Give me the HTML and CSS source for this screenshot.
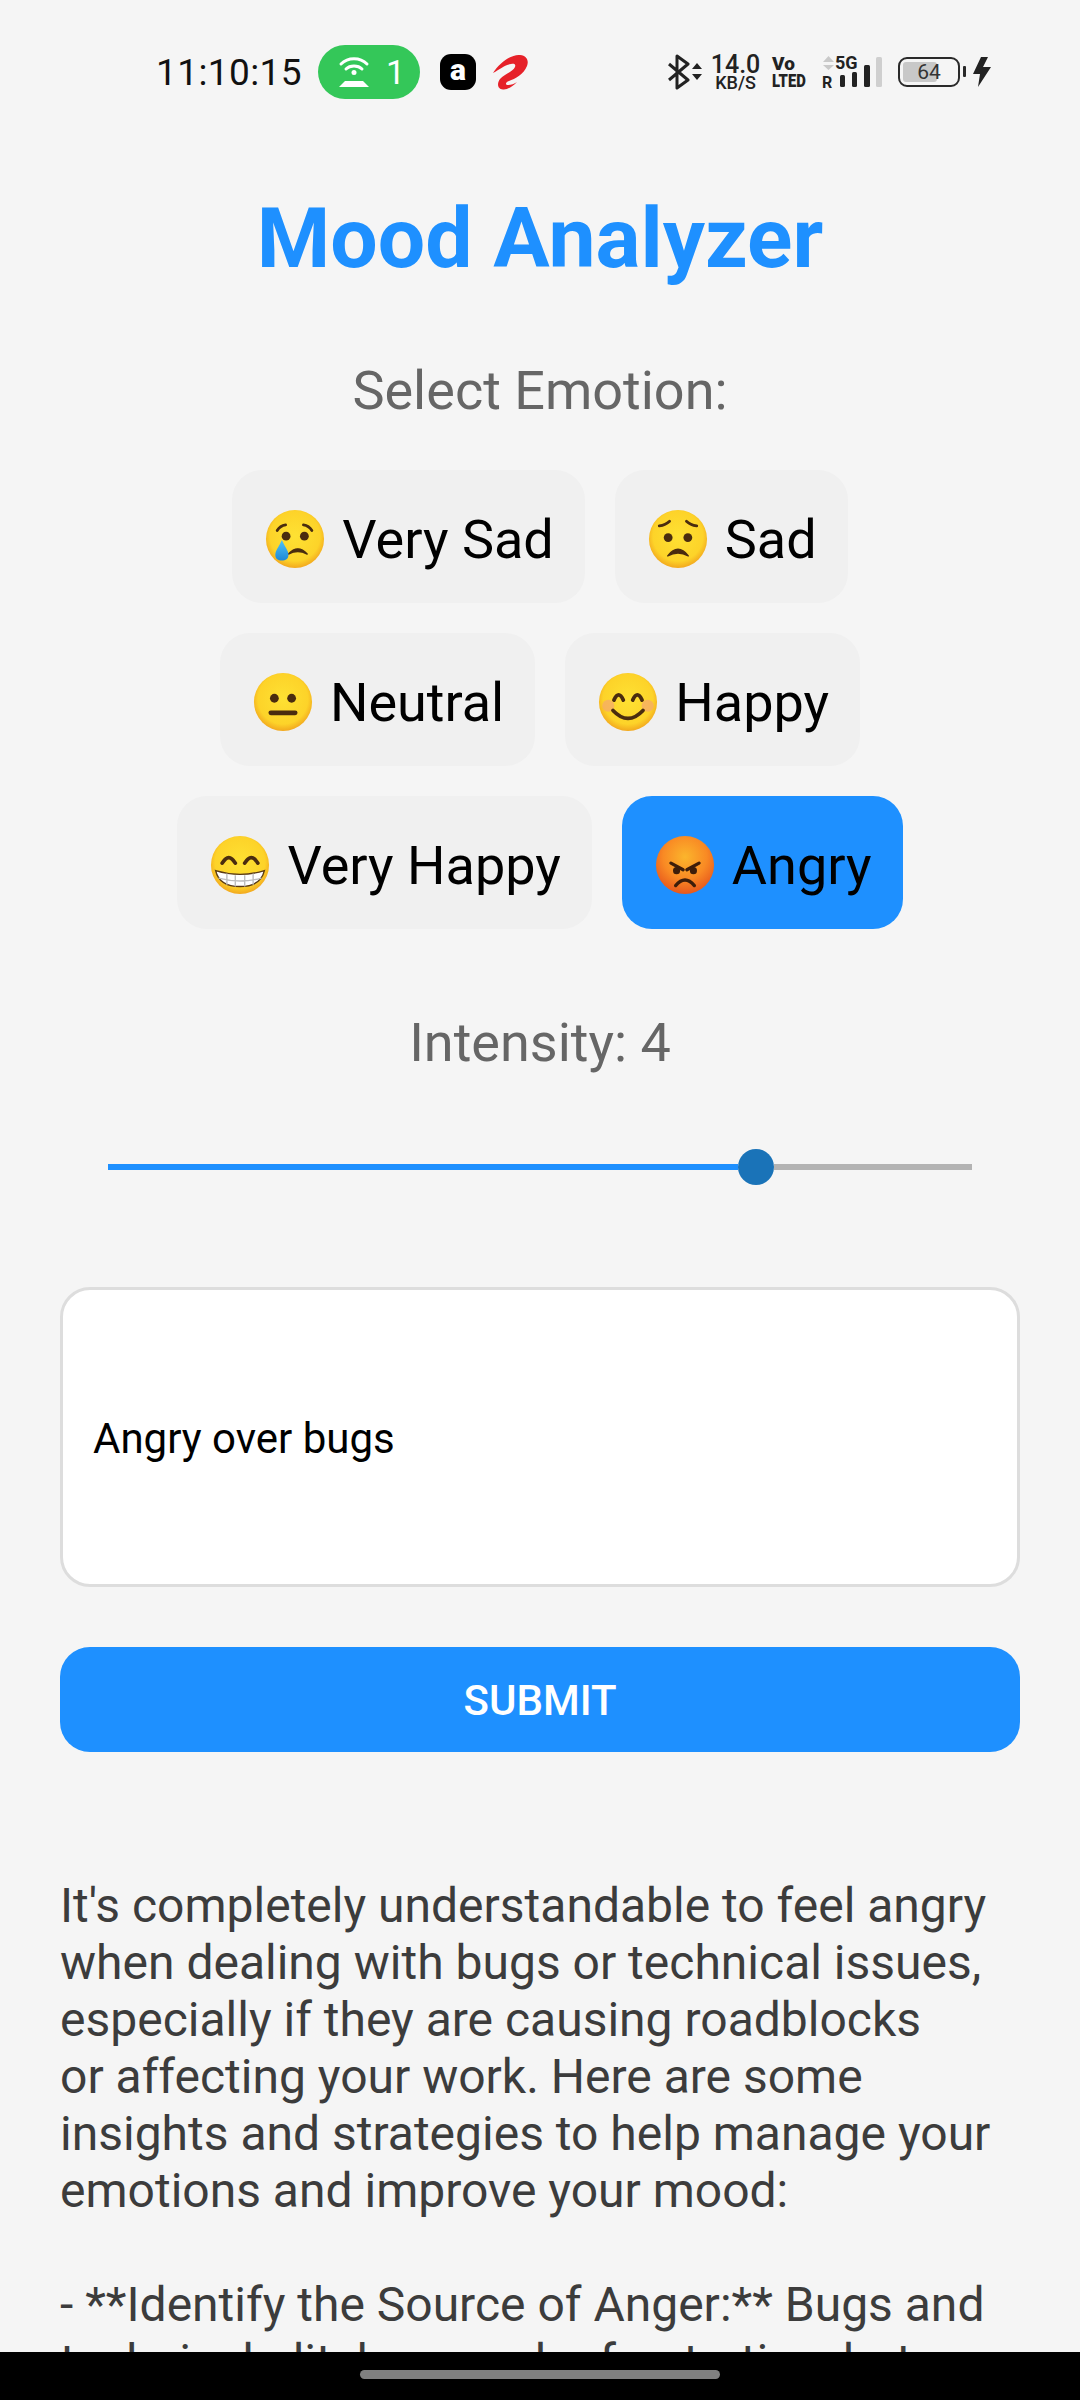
FILE: index.html
```html
<!DOCTYPE html>
<html lang="en">
<head>
<meta charset="utf-8">
<title>Mood Analyzer</title>
<link rel="stylesheet" href="styles.css">
</head>
<body>
<svg class="defs" width="0" height="0" aria-hidden="true">
  <defs>
    <radialGradient id="yel" cx="50%" cy="45%" r="55%">
      <stop offset="0" stop-color="#fee133"/><stop offset="0.78" stop-color="#fdd329"/><stop offset="1" stop-color="#f2a81e"/>
    </radialGradient>
    <radialGradient id="ang" cx="50%" cy="36%" r="68%">
      <stop offset="0" stop-color="#fbb52c"/><stop offset="0.55" stop-color="#f98a24"/><stop offset="1" stop-color="#e4501c"/>
    </radialGradient>
    <linearGradient id="tear" x1="0" y1="0" x2="0" y2="1">
      <stop offset="0" stop-color="#4fc3f7"/><stop offset="1" stop-color="#1e88d6"/>
    </linearGradient>
  </defs>
</svg>
<header class="status">
  <div class="status-left">
    <span class="clock">11:10:15</span>
    <span class="hotspot">
      <svg class="hotspot-ic" viewBox="0 0 32 36"><path d="M3 10C10 3 22 3 29 10" class="hs-line"/><path d="M8 15C12 11 20 11 24 15" class="hs-line"/><circle cx="16" cy="18.500" r="2.500" fill="#fff"/><path d="M1 33L7 27H25L31 33Z" fill="#fff"/></svg>
      <span class="hotspot-n">1</span>
    </span>
    <span class="app-a">a</span>
    <svg class="airtel" viewBox="0 0 36 36"><path d="M1 19C8 8 20 0 28 1C35 1.500 37 7 35 12C32 20 23 25 17 27C14 28 13 30 15 31C18 31.500 22 30 25 28C20 33 15 36 11 35.500C5 35 5 29 8 25C12 20 21 18 23 13C24 10 22 9 19 10C13 11 8 15 1 19Z" fill="#e62129"/></svg>
  </div>
  <div class="status-right">
    <svg class="ic-bt" viewBox="0 0 34 36"><path d="M1 10L20 26L9 34V2L20 10L1 26" class="bt-line"/><path d="M24 15L29 9L34 15ZM24 20H34L29 26Z" fill="#222"/></svg>
    <span class="speed"><b>14.0</b><i>KB/S</i></span>
    <span class="volte"><b>Vo</b><i>LTED</i></span>
    <svg class="signal" viewBox="0 0 60 36">
      <path d="M1 8L6.500 2L12 8ZM1 11H12L6.500 16Z" fill="#c9c9c9"/>
      <text x="13" y="15" class="sig-5g">5G</text>
      <text x="0" y="34" class="sig-r">R</text>
      <rect x="18" y="21" width="5" height="12" rx="1.500" fill="#222"/>
      <rect x="30" y="18" width="5" height="15" rx="1.500" fill="#222"/>
      <rect x="42" y="11" width="6" height="22" rx="1.500" fill="#222"/>
      <rect x="54" y="3" width="6" height="30" rx="1.500" fill="#cfcfcf"/>
    </svg>
    <span class="battery"><span class="bat-fill"></span><span class="bat-num">64</span><span class="bat-tip"></span></span>
    <svg class="bolt" viewBox="0 0 20 32"><path d="M9 1L1 18H8L6 31L19 11H11L16 1Z" fill="#222"/></svg>
  </div>
</header>

<main class="page">
  <h1 class="title">Mood Analyzer</h1>
  <p class="label label-emotion">Select Emotion:</p>
  <div class="moods">
    <div class="mood-row">
      <button class="mood">
        <svg class="emo" viewBox="0 0 64 64"><circle cx="32" cy="32" r="31" fill="url(#yel)"/><circle cx="22.500" cy="29" r="4.700" fill="#4a2c0f"/><circle cx="42" cy="29" r="4.700" fill="#4a2c0f"/><path d="M13 23Q16 18 22 17M41 17Q47 18 50 23" class="brow"/><path d="M25 48Q35 37 45 48Q35 43 25 48Z" class="mouth-fill"/><path d="M18 33C15 40 11 44 11 49C11 53 14 55 18 55C22 55 25 53 25 49C25 44 21 40 18 33Z" fill="url(#tear)"/></svg>
        <span>Very Sad</span>
      </button>
      <button class="mood">
        <svg class="emo" viewBox="0 0 64 64"><circle cx="32" cy="32" r="31" fill="url(#yel)"/><circle cx="21.500" cy="30.500" r="4.700" fill="#4a2c0f"/><circle cx="42.500" cy="30.500" r="4.700" fill="#4a2c0f"/><path d="M12 18Q19 17 23 13M41 13Q45 17 52 18" class="brow"/><path d="M21 50Q32 36 43 50Q32 44 21 50Z" class="mouth-fill"/></svg>
        <span>Sad</span>
      </button>
    </div>
    <div class="mood-row">
      <button class="mood">
        <svg class="emo" viewBox="0 0 64 64"><circle cx="32" cy="32" r="31" fill="url(#yel)"/><circle cx="22.800" cy="28" r="4.700" fill="#4a2c0f"/><circle cx="41.200" cy="28" r="4.700" fill="#4a2c0f"/><rect x="16.500" y="41" width="31" height="5" rx="2.500" fill="#4a2c0f"/></svg>
        <span>Neutral</span>
      </button>
      <button class="mood">
        <svg class="emo" viewBox="0 0 64 64"><circle cx="32" cy="32" r="31" fill="url(#yel)"/><circle cx="11" cy="36" r="6.500" fill="#f4a07c" opacity=".6"/><circle cx="53" cy="36" r="6.500" fill="#f4a07c" opacity=".6"/><path d="M17 30Q22 19 27 30M37 30Q42 19 47 30" class="eye-arc"/><path d="M16 41Q32 58 48 41" class="eye-arc"/></svg>
        <span>Happy</span>
      </button>
    </div>
    <div class="mood-row">
      <button class="mood">
        <svg class="emo" viewBox="0 0 64 64"><circle cx="32" cy="32" r="31" fill="url(#yel)"/><path d="M13 30Q20 18 27 30M37 30Q44 18 51 30" class="eye-arc"/><path d="M6 38Q32 46 58 38Q54 55 32 55Q10 55 6 38Z" fill="#fff" stroke="#5a3a14" stroke-width="1.500"/><path d="M18 41V53M27 43V55M37 43V55M46 41V53M9 46Q32 52 55 46" class="teeth"/></svg>
        <span>Very Happy</span>
      </button>
      <button class="mood mood-on">
        <svg class="emo" viewBox="0 0 64 64"><circle cx="32" cy="32" r="31" fill="url(#ang)"/><path d="M17 30L30 37M47 30L34 37" class="ang-line"/><circle cx="23" cy="38" r="3.800" fill="#3d1d0a"/><circle cx="41" cy="38" r="3.800" fill="#3d1d0a"/><path d="M22 54Q32 42 42 54" class="ang-line"/></svg>
        <span>Angry</span>
      </button>
    </div>
  </div>
  <p class="label label-intensity">Intensity: 4</p>
  <div class="slider">
    <div class="slider-on"></div>
    <div class="slider-thumb"></div>
    <div class="slider-off"></div>
  </div>
  <div class="field">Angry over bugs</div>
  <button class="submit">SUBMIT</button>
  <p class="answer">It's completely understandable to feel angry<br>when dealing with bugs or technical issues,<br>especially if they are causing roadblocks<br>or affecting your work. Here are some<br>insights and strategies to help manage your<br>emotions and improve your mood:<br><br>- **Identify the Source of Anger:** Bugs and<br>technical glitches can be frustrating, but</p>
</main>

<footer class="navbar"><span class="handle"></span></footer>
</body>
</html>
```
FILE: styles.css
```css
* { box-sizing: border-box; }
html, body { margin: 0; padding: 0; }
body {
  width: 1080px;
  height: 2400px;
  overflow: hidden;
  position: relative;
  background: #f5f5f5;
  font-family: Roboto, "Noto Sans", sans-serif;
}
.defs { position: absolute; }

/* status bar */
.status {
  height: 126px;
  padding: 45px 88px 0 156px;
  display: flex;
  justify-content: space-between;
  align-items: flex-start;
}
.status-left { display: flex; align-items: center; height: 54px; }
.clock { font-size: 37px; color: #111; letter-spacing: .4px; width: 162px; }
.hotspot {
  width: 102px; height: 54px; border-radius: 27px; background: #34c759;
  display: flex; align-items: center; padding-left: 20px; gap: 16px;
}
.hotspot-ic { width: 32px; height: 36px; }
.hs-line { fill: none; stroke: #fff; stroke-width: 3; stroke-linecap: round; }
.hotspot-n { color: #fff; font-size: 34px; }
.app-a {
  width: 36px; height: 36px; margin-left: 20px; border-radius: 11px; background: #000;
  color: #fff; font-size: 30px; font-weight: 900; display: flex; align-items: center; justify-content: center; line-height: 1; padding-bottom: 4px;
}
.airtel { width: 36px; height: 36px; margin-left: 16px; }
.status-right { display: flex; align-items: center; height: 54px; color: #222; }
.ic-bt { width: 34px; height: 36px; }
.bt-line { fill: none; stroke: #222; stroke-width: 3; stroke-linejoin: round; }
.speed { display: flex; flex-direction: column; align-items: center; margin-left: 10px; width: 47px; }
.speed b { font-size: 25px; font-weight: 500; height: 21px; line-height: 21px; }
.speed i { font-style: normal; font-size: 18px; font-weight: 500; height: 15px; line-height: 15px; }
.volte { display: flex; flex-direction: column; margin-left: 13px; width: 36px; }
.volte b { font-size: 19px; font-weight: 900; height: 17px; line-height: 17px; }
.volte i { font-style: normal; font-size: 19px; font-weight: 900; height: 17px; line-height: 17px; width: 46px; transform: scaleX(.78); transform-origin: left center; }
.signal { width: 60px; height: 36px; margin-left: 14px; }
.sig-5g { font: 700 18px Roboto, sans-serif; fill: #222; }
.sig-r { font: 700 16px Roboto, sans-serif; fill: #222; }
.battery {
  position: relative; width: 62px; height: 30px; margin-left: 16px;
  border: 2.500px solid #2a2a2a; border-radius: 9px; display: flex; align-items: center; justify-content: center;
}
.bat-fill { position: absolute; left: 3px; top: 3px; bottom: 3px; width: 34px; background: #c8c8c8; border-radius: 3px; }
.bat-num { position: relative; font-size: 21px; color: #333; }
.bat-tip { position: absolute; right: -8px; top: 7px; width: 3px; height: 11px; background: #2a2a2a; border-radius: 1px; }
.bolt { width: 20px; height: 32px; margin-left: 12px; }

/* content */
.page { padding: 0 60px; display: flex; flex-direction: column; align-items: center; }
.title { margin: 64px 0 0; font-size: 84px; line-height: 98px; font-weight: 700; color: #1e90ff; }
.label { margin: 0; font-size: 54px; color: #666; line-height: 64px; }
.label-emotion { margin-top: 71px; }
.moods { margin-top: 47px; display: flex; flex-direction: column; gap: 30px; }
.mood-row { display: flex; justify-content: center; gap: 30px; }
.mood {
  height: 133px; padding: 5px 31px 0 33px; border: 0; border-radius: 30px; background: #f0f0f0;
  color: #000; font: 400 54px Roboto, sans-serif; display: flex; align-items: center; gap: 17px;
}
.mood-on { background: #1e90ff; }
.emo { width: 60px; height: 60px; flex: none; }
.brow { fill: none; stroke: #4a2c0f; stroke-width: 3; stroke-linecap: round; }
.mouth-fill { fill: #4a2c0f; stroke: #4a2c0f; stroke-width: 1.500; stroke-linejoin: round; }
.eye-arc { fill: none; stroke: #4a2c0f; stroke-width: 4; stroke-linecap: round; }
.teeth { fill: none; stroke: #bdbdbd; stroke-width: 1.500; }
.ang-line { fill: none; stroke: #3d1d0a; stroke-width: 3.500; stroke-linecap: round; }
.label-intensity { margin-top: 82px; }
.slider { width: 864px; height: 36px; margin-top: 74px; display: flex; align-items: center; }
.slider-on { width: 630px; height: 6px; background: #1e90ff; }
.slider-thumb { width: 36px; height: 36px; border-radius: 50%; background: #1a73b8; flex: none; }
.slider-off { flex: 1; height: 6px; background: #b3b3b3; }
.field {
  width: 960px; height: 300px; margin-top: 102px; padding: 2px 30px 0; border: 3px solid #ddd; border-radius: 30px;
  background: #fff; color: #000; font-size: 42px; display: flex; align-items: center;
}
.submit {
  width: 960px; height: 105px; margin-top: 60px; padding: 2px 0 0; border: 0; border-radius: 30px; background: #1e90ff;
  color: #fff; font: 500 42px Roboto, sans-serif;
}
.answer { align-self: stretch; margin: 125px 0 0; font-size: 48px; line-height: 57px; color: #3c3c3c; white-space: nowrap; }

.navbar { position: absolute; left: 0; right: 0; bottom: 0; height: 48px; background: #000; display: flex; justify-content: center; padding-top: 18px; }
.handle { width: 360px; height: 9px; border-radius: 5px; background: #808080; }
```
